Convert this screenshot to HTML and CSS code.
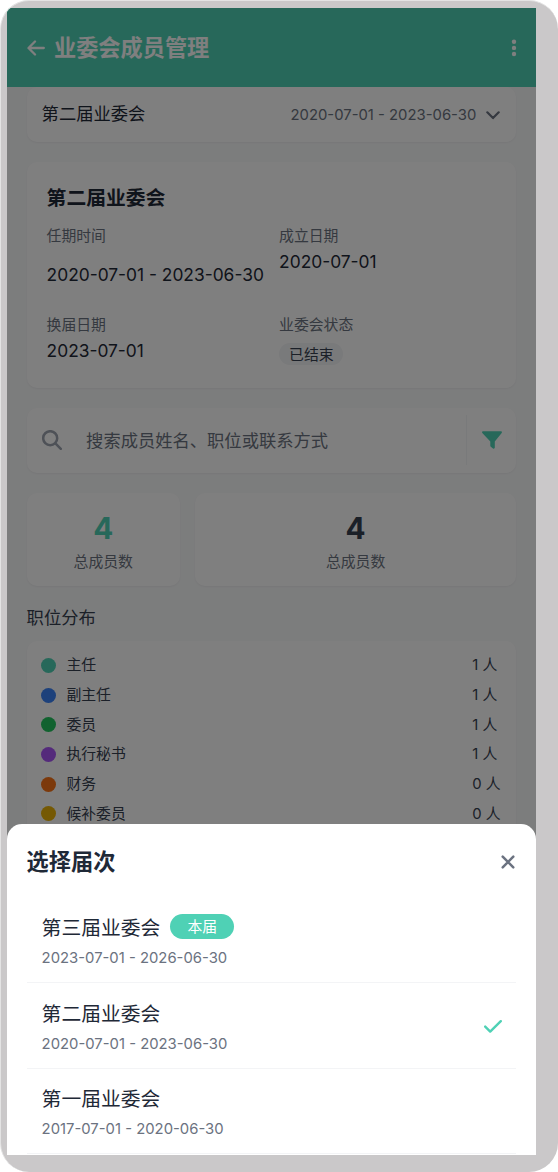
FILE: index.html
```
<!DOCTYPE html>
<html lang="zh-CN">
<head>
<meta charset="utf-8">
<title>业委会成员管理</title>
<link rel="stylesheet" href="styles.css">
</head>
<body>
<div class="device">
  <div class="screen">
    <header class="topbar">
      <svg class="back" viewBox="0 0 18 16"><path d="M8 1.5 1.5 8 8 14.5M1.8 8H16.8"/></svg>
      <h1>业委会成员管理</h1>
      <svg class="more" viewBox="0 0 6 18"><circle cx="3" cy="2.8" r="2.2"/><circle cx="3" cy="8.9" r="2.2"/><circle cx="3" cy="15" r="2.2"/></svg>
    </header>
    <main class="content">
      <div class="card term">
        <span class="term-name">第二届业委会</span>
        <span class="term-date">2020-07-01 - 2023-06-30</span>
        <svg class="chevron" viewBox="0 0 14 9"><path d="M1.3 1.3 7 7.1 12.7 1.3"/></svg>
      </div>
      <section class="card info">
        <h2>第二届业委会</h2>
        <div class="info-grid">
          <div class="field spaced"><span class="label">任期时间</span><span class="value">2020-07-01 - 2023-06-30</span></div>
          <div class="field"><span class="label">成立日期</span><span class="value">2020-07-01</span></div>
          <div class="field"><span class="label">换届日期</span><span class="value">2023-07-01</span></div>
          <div class="field"><span class="label">业委会状态</span><span class="status">已结束</span></div>
        </div>
      </section>
      <div class="card search">
        <svg class="magnifier" viewBox="0 0 20 20"><circle cx="8.2" cy="8.2" r="7"/><path d="m13.4 13.4 5.4 5.4"/></svg>
        <span class="placeholder">搜索成员姓名、职位或联系方式</span>
        <div class="filter"><svg viewBox="0 0 20 18"><path d="M1.2.2h17.6c1 0 1.5 1 .9 1.8l-6.900 8.500v6c0 1-1 1.500-1.800.9l-2.200-1.700a1.300 1.300 0 0 1-.5-1v-4.200L.3 2C-.3 1.200.2.2 1.200.2Z"/></svg></div>
      </div>
      <div class="stats">
        <div class="card stat"><b class="accent">4</b><span>总成员数</span></div>
        <div class="card stat"><b>4</b><span>总成员数</span></div>
      </div>
      <h3>职位分布</h3>
      <ul class="card roles">
        <li><i class="dot teal"></i><span>主任</span><span class="count">1 人</span></li>
        <li><i class="dot blue"></i><span>副主任</span><span class="count">1 人</span></li>
        <li><i class="dot green"></i><span>委员</span><span class="count">1 人</span></li>
        <li><i class="dot purple"></i><span>执行秘书</span><span class="count">1 人</span></li>
        <li><i class="dot orange"></i><span>财务</span><span class="count">0 人</span></li>
        <li><i class="dot yellow"></i><span>候补委员</span><span class="count">0 人</span></li>
      </ul>
    </main>
    <div class="overlay"></div>
    <section class="sheet">
      <div class="sheet-head">
        <h2>选择届次</h2>
        <svg class="close" viewBox="0 0 14 14"><path d="m1.700 1.700 10.600 10.600M12.300 1.700 1.700 12.300"/></svg>
      </div>
      <div class="option">
        <div class="option-text"><div class="option-name">第三届业委会<span class="current">本届</span></div><div class="option-date">2023-07-01 - 2026-06-30</div></div>
      </div>
      <div class="option">
        <div class="option-text"><div class="option-name">第二届业委会</div><div class="option-date">2020-07-01 - 2023-06-30</div></div>
        <svg class="check" viewBox="0 0 18 13"><path d="m1.200 6.600 5 5L16.800 1.200"/></svg>
      </div>
      <div class="option">
        <div class="option-text"><div class="option-name">第一届业委会</div><div class="option-date">2017-07-01 - 2020-06-30</div></div>
      </div>
    </section>
  </div>
</div>
</body>
</html>
```
FILE: styles.css
```
* { box-sizing: border-box; }
body {
  margin: 0;
  background: #fff;
  font-family: Inter, "Noto Sans CJK SC", sans-serif;
  color: #1f2937;
}
h1, h2, h3, ul { margin: 0; padding: 0; }
svg { display: block; flex: none; fill: none; stroke-linecap: round; stroke-linejoin: round; }
.device {
  width: 558px;
  height: 1172px;
  padding: 7px 22px 17.500px 6px;
  border-radius: 29px;
  background: #cac8c9;
  border-left: 1px solid #e3e3e3;
  border-top: 1px solid #e3e3e3;
  overflow: hidden;
}
.screen {
  position: relative;
  height: 1146.500px;
  width: 529.300px;
  overflow: hidden;
  background: #f9fafb;
}
.topbar {
  display: flex;
  align-items: center;
  height: 79.400px;
  padding: 0 19.500px;
  background: #4fd1b5;
  color: #fff;
}
.back { width: 18px; height: 16px; stroke: #fff; stroke-width: 2.300; }
.topbar h1 {
  flex: 1;
  margin-left: 9.500px;
  font-size: 22.200px;
  line-height: 30px;
  font-weight: 700;
}
.more { width: 6px; height: 18px; fill: #fff; }
.content { padding: 0 20px 0 19.600px; }
.card {
  background: #fff;
  border-radius: 10px;
  box-shadow: 0 1px 2px rgba(0, 0, 0, 0.05);
}
.term {
  display: flex;
  align-items: center;
  height: 54.600px;
  padding: 0 16px 0 15px;
}
.term-name { flex: 1; font-size: 17.300px; line-height: 26px; padding-bottom: 1px; }
.term-date { margin-right: 10px; padding-top: 1px; font-size: 14.850px; line-height: 20px; color: #6b7280; }
.chevron { width: 14px; height: 9px; margin-top: 2px; stroke: #6b7280; stroke-width: 2.200; }
.info { height: 226.500px; margin-top: 20px; padding: 20px 20px; }
.info h2 { padding-top: 1px; font-size: 19.800px; line-height: 30px; font-weight: 700; }
.info-grid {
  display: grid;
  grid-template-columns: 217.500px 1fr;
  column-gap: 15px;
  grid-template-rows: 89px 60px;
  margin-top: 12px;
}
.field { display: flex; flex-direction: column; align-items: flex-start; }
.label { font-size: 14.850px; line-height: 22px; color: #6b7280; }
.value { margin-top: 3px; font-size: 17.380px; line-height: 24px; white-space: nowrap; }
.spaced .value { margin-top: 16px; }
.status {
  margin-top: 7px;
  padding: 2px 9.500px 0 10px;
  border-radius: 11px;
  background: #f3f4f6;
  color: #374151;
  font-size: 14.850px;
  line-height: 20px;
}
.search {
  display: flex;
  align-items: center;
  height: 64.500px;
  margin-top: 19.700px;
  padding-left: 15px;
}
.magnifier { width: 20px; height: 20px; stroke: #9ca3af; stroke-width: 2.500; }
.placeholder { flex: 1; margin-left: 24.500px; padding-bottom: 1px; font-size: 17.300px; color: #6b7280; }
.filter {
  display: grid;
  place-items: center;
  width: 50px;
  height: 50px;
  border-left: 1px solid #f3f4f6;
}
.filter svg { width: 20px; height: 18px; fill: #4fd1b5; }
.stats { display: grid; grid-template-columns: 153.300px 1fr; gap: 15px; margin-top: 20px; }
.stat { display: flex; flex-direction: column; align-items: center; height: 93.500px; padding-top: 17px; }
.stat b { font-size: 29.700px; line-height: 36px; color: #374151; }
.stat .accent { color: #4fd1b5; }
.stat span { margin-top: 5px; font-size: 14.850px; line-height: 22px; color: #6b7280; }
.content h3 { margin: 19px 0 11px; font-size: 17.300px; line-height: 25px; font-weight: 400; color: #374151; }
.roles { height: 260px; padding: 9.500px 15px 9.500px 14.500px; list-style: none; }
.roles li { display: flex; align-items: center; height: 29.650px; font-size: 14.850px; line-height: 22px; color: #374151; }
.dot { width: 15px; height: 15px; margin-right: 10.300px; border-radius: 50%; }
.count { width: 29px; margin-left: auto; white-space: nowrap; font-kerning: none; }
.teal { background: #4fd1b5; }
.blue { background: #3b82f6; }
.green { background: #22c55e; }
.purple { background: #a855f7; }
.orange { background: #f97316; }
.yellow { background: #eab308; }
.overlay { position: absolute; inset: 0; background: rgba(0, 0, 0, 0.5); }
.sheet {
  position: absolute;
  inset: auto 0 0;
  height: 330.300px;
  padding: 20.500px 20px 0 19.600px;
  border-radius: 15px 15px 0 0;
  background: #fff;
}
.sheet-head { display: flex; align-items: center; justify-content: space-between; height: 34px; margin-bottom: 19.200px; }
.sheet-head h2 { font-size: 22.200px; line-height: 34px; font-weight: 700; }
.close { width: 14px; height: 14px; margin-right: 1.500px; stroke: #6b7280; stroke-width: 2.500; }
.option {
  display: flex;
  align-items: center;
  justify-content: space-between;
  height: 85.500px;
  padding: 1px 14.500px 0 15px;
  border-bottom: 1px solid #f3f4f6;
}
.option-name { display: flex; align-items: center; height: 29px; font-size: 19.800px; }
.option-date { margin-top: 6px; font-size: 14.850px; line-height: 22px; color: #6b7280; }
.current {
  width: 64px;
  height: 25px;
  margin-left: 10px;
  padding-top: 1px;
  border-radius: 13px;
  background: #4fd1b5;
  color: #fff;
  font-size: 14.850px;
  line-height: 24px;
  text-align: center;
}
.check { width: 18px; height: 13px; stroke: #4fd1b5; stroke-width: 2.400; }
```
